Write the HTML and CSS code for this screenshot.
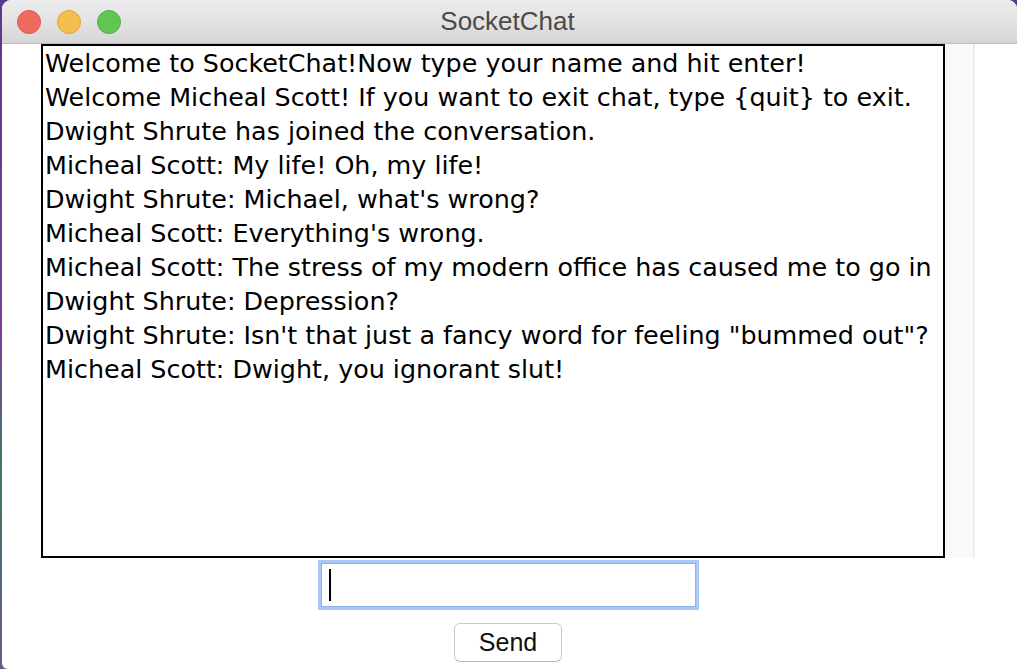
FILE: index.html
```html
<!DOCTYPE html>
<html>
<head>
<meta charset="utf-8">
<title>SocketChat</title>
<link rel="stylesheet" href="styles.css">
</head>
<body>
<div class="window">
  <div class="titlebar">
    <div class="lights">
      <span class="light red"></span>
      <span class="light yellow"></span>
      <span class="light green"></span>
    </div>
    <div class="title">SocketChat</div>
    <div class="spacer"></div>
  </div>
  <div class="content">
    <div class="chat-row">
      <div class="chat">
        <div class="line">Welcome to SocketChat!Now type your name and hit enter!</div>
        <div class="line">Welcome Micheal Scott! If you want to exit chat, type {quit} to exit.</div>
        <div class="line">Dwight Shrute has joined the conversation.</div>
        <div class="line">Micheal Scott: My life! Oh, my life!</div>
        <div class="line">Dwight Shrute: Michael, what's wrong?</div>
        <div class="line">Micheal Scott: Everything's wrong.</div>
        <div class="line">Micheal Scott: The stress of my modern office has caused me to go in</div>
        <div class="line">Dwight Shrute: Depression?</div>
        <div class="line">Dwight Shrute: Isn't that just a fancy word for feeling "bummed out"?</div>
        <div class="line">Micheal Scott: Dwight, you ignorant slut!</div>
      </div>
      <div class="scrolltrack"></div>
    </div>
    <div class="field"><span class="caret"></span></div>
    <button class="send">Send</button>
  </div>
</div>
</body>
</html>
```
FILE: styles.css
```css
html, body {
  margin: 0;
  padding: 0;
}
body {
  width: 1017px;
  height: 669px;
  overflow: hidden;
  background: linear-gradient(180deg, #5a3a8c 0%, #7b3f98 50%, #3e7a6a 70%, #6a5a8a 100%);
}
.window {
  margin-left: 2px;
  width: 1015px;
  height: 669px;
  background: #ffffff;
  border-radius: 9px 9px 0 6px;
  overflow: hidden;
  display: flex;
  flex-direction: column;
}
.titlebar {
  height: 43px;
  flex: none;
  border-bottom: 1px solid #bdbdbd;
  background: linear-gradient(180deg, #ececec 0%, #e3e3e3 50%, #d5d5d5 100%);
  display: grid;
  grid-template-columns: 1fr auto 1fr;
  align-items: center;
}
.lights {
  display: flex;
  gap: 16px;
  padding-left: 15px;
}
.light {
  width: 24px;
  height: 24px;
  border-radius: 50%;
  box-sizing: border-box;
}
.red { background: #ed6a5e; border: 1px solid #d8584c; }
.yellow { background: #f5bf4f; border: 1px solid #dca63b; }
.green { background: #61c554; border: 1px solid #4fae44; }
.title {
  font-family: "Liberation Sans", Arial, sans-serif;
  font-size: 26px;
  color: #4a4a4a;
  margin-right: 4px;
}
.content {
  width: 934px;
  margin-left: 39px;
  display: flex;
  flex-direction: column;
  align-items: center;
}
.chat-row {
  display: flex;
  width: 934px;
  height: 514px;
}
.chat {
  width: 904px;
  height: 514px;
  box-sizing: border-box;
  border: 2px solid #000000;
  padding-left: 2px;
  overflow: hidden;
  white-space: nowrap;
  font-family: "DejaVu Sans", Verdana, sans-serif;
  font-size: 25.4px;
  line-height: 34px;
  color: #000000;
}
.scrolltrack {
  width: 30px;
  box-sizing: border-box;
  border-left: 1px solid #ffffff;
  border-right: 2px solid #ececec;
  background: #f9f9f9;
}
.field {
  margin-top: 5px;
  width: 375px;
  height: 44px;
  box-sizing: border-box;
  border: 1px solid #8eb2e4;
  box-shadow: 0 0 0 3px #a7c9f7;
  background: #ffffff;
  display: flex;
  align-items: center;
  padding-left: 7px;
}
.caret {
  width: 2px;
  height: 32px;
  background: #000000;
}
.send {
  margin-top: 16px;
  width: 108px;
  height: 39px;
  box-sizing: border-box;
  border: 1px solid #cbcbcb;
  border-bottom-color: #b8b8b8;
  border-radius: 6px;
  background: #ffffff;
  font-family: "Liberation Sans", Arial, sans-serif;
  font-size: 25px;
  color: #111111;
  padding: 0;
  line-height: 37px;
}
```
